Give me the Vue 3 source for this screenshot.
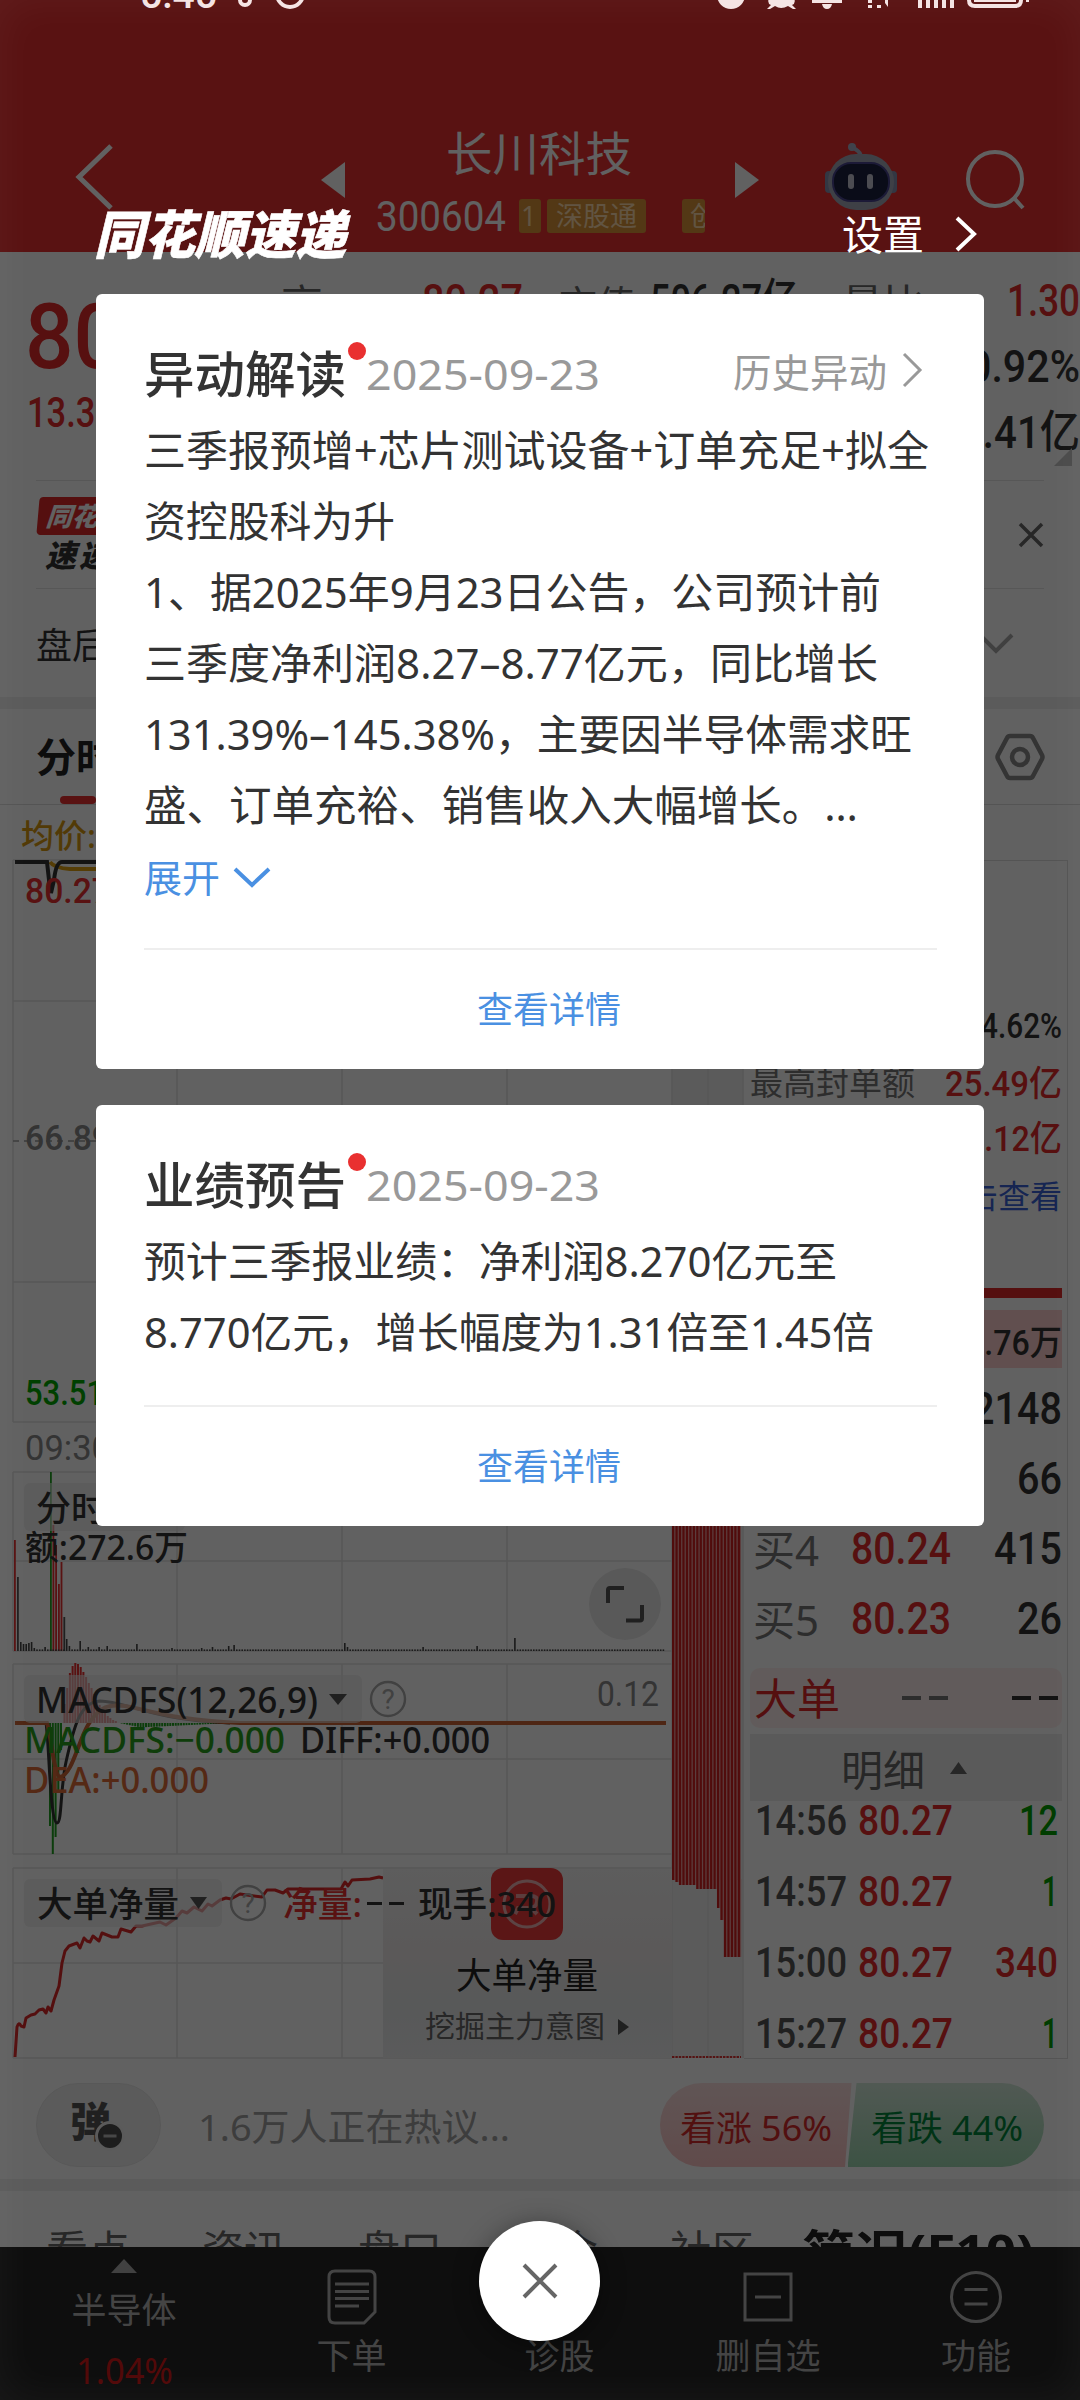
<script setup>
const vFit = {
  mounted(el, { value }) {
    const natural = el.getBoundingClientRect().width
    el.style.width = value + 'px'
    el.style.transform = `scaleX(${value / natural})`
  },
}

const cards = [
  {
    title: '异动解读', date: '2025-09-23', history: '历史异动', expand: '展开',
    lines: [
      ['三季报预增+芯片测试设备+订单充足+拟全', 785],
      ['资控股科为升', 251],
      ['1、据2025年9月23日公告，公司预计前', 737],
      ['三季度净利润8.27–8.77亿元，同比增长', 734],
      ['131.39%–145.38%，主要因半导体需求旺', 768],
      ['盛、订单充裕、销售收入大幅增长。…', 714],
    ],
  },
  {
    title: '业绩预告', date: '2025-09-23',
    lines: [
      ['预计三季报业绩：净利润8.270亿元至', 693],
      ['8.770亿元，增长幅度为1.31倍至1.45倍', 730],
    ],
  },
]

const bids = [
  ['买1', '80.27', 92, '2148', 90],
  ['买3', '80.25', 100, '66', 45],
  ['买4', '80.24', 100, '415', 68],
  ['买5', '80.23', 100, '26', 45],
]
const trades = [
  ['14:56', '12', 39, 'green'],
  ['14:57', '1', 16, 'green'],
  ['15:00', '340', 63, 'red'],
  ['15:27', '1', 16, 'green'],
]
const bottomTabs = ['看点', '资讯', '盘口', '资金', '社区']

const gridX = [177, 342, 507]

const tallBars = [
  [14, 1540, '#e93030'], [17, 1577, '#555'], [50, 1472, '#20a020'], [52.5, 1525, '#e93030'], [55.2, 1545, '#e93030'],
  [58, 1584, '#e93030'], [60.6, 1562, '#e93030'], [63.4, 1617, '#555'],
]
const spikes = { 20: 9, 23: 7, 26: 7, 28: 8, 31: 9, 34: 3, 45: 4, 66: 12, 69: 5, 80: 10, 88: 4, 99: 4, 107: 5, 137: 7, 172: 3, 200: 3, 213: 4, 229: 5, 232: 6, 343: 8, 348: 4, 421: 4, 475: 5, 513: 13 }
const smallBars = []
for (let i = 0; i < 239; i++) {
  const x = 20 + i * 2.7
  let h = 1.6
  for (const k in spikes) if (Math.abs(k - x) < 1.35) h = spikes[k]
  smallBars.push([x, h])
}

const macdUp = [[63.5, 1704], [66.2, 1688], [68.9, 1673], [71.6, 1666], [74.3, 1663], [77, 1664], [79.7, 1667], [82.4, 1672], [85.1, 1677], [87.8, 1683], [90.5, 1688], [93.2, 1694], [95.9, 1700], [98.6, 1705], [101.3, 1709], [104, 1713], [106.7, 1716], [109.4, 1718], [112.1, 1720], [114.8, 1721]]
const macdDown = [[49, 1826], [51.8, 1854], [54.6, 1837], [57.3, 1790], [60, 1750]]
const macdTail = Array.from({ length: 38 }, (_, i) => [118 + i * 2.7, i < 8 ? i * 0.55 : Math.max(0.8, 4.4 - (i - 8) * 0.13)])

const strips = Array.from({ length: 20 }, (_, i) => {
  const x = 672 + i * 3.46
  const y = x < 675 ? 1880 : x < 678 ? 1882 : x < 696 ? 1885 : x < 716 ? 1889 : x < 719.5 ? 1908 : x < 723 ? 1920 : 1957
  return [x, y]
})
</script>

<template>
  <div class="screen">
    <div class="page">
      <header class="top">
        <svg class="back" width="40" height="70" viewBox="0 0 40 70"><path d="M36 4 4 35 36 66" /></svg>
        <svg class="tri" width="24" height="36"><path d="M24 0V36L0 18z" /></svg>
        <div class="stock">
          <div class="name">长川科技</div>
          <div class="code-row">
            <span v-fit="130" class="fit code">300604</span>
            <span class="tag one">1</span><span class="tag full">深股通</span><span class="tag cut">创</span>
          </div>
        </div>
        <svg class="tri" width="24" height="36"><path d="M0 0V36L24 18z" /></svg>
        <svg class="robot" width="74" height="70" viewBox="0 0 74 70">
          <path d="M37 14C36 6 31 8 28 3" fill="none" stroke="#a9b0c8" stroke-width="4" stroke-linecap="round" />
          <circle cx="28" cy="4" r="4" fill="#a9b0c8" />
          <rect x="1" y="28" width="8" height="22" rx="4" fill="#8790b0" /><rect x="65" y="28" width="8" height="22" rx="4" fill="#8790b0" />
          <rect x="4" y="11" width="66" height="56" rx="28" fill="#a4a8b8" />
          <rect x="9" y="20" width="56" height="38" rx="18" fill="#1b2040" stroke="#4a4690" stroke-width="2" />
          <rect x="24" y="31" width="6" height="15" rx="3" fill="#c8c8d4" /><rect x="43" y="31" width="6" height="15" rx="3" fill="#c8c8d4" />
        </svg>
        <svg class="search" width="64" height="64" viewBox="0 0 64 64"><circle cx="32" cy="31" r="27" /><path d="M51 50 60 60" /></svg>
      </header>

      <section class="quote">
        <div class="price-col">
          <div class="big"><span v-fit="218" class="fit">80.27</span></div>
          <div class="chg"><span v-fit="88" class="fit">13.38</span></div>
        </div>
        <div class="stats">
          <div class="stat first">
            <span class="k">高</span><span v-fit="101" class="fit num red v1">80.27</span>
            <span class="k k2">市值</span><span v-fit="148" class="fit num v2">506.27亿</span>
            <span class="k k3">量比</span><span v-fit="73" class="fit num red v3">1.30</span>
          </div>
          <div class="stat"><span v-fit="112" class="fit num v3">0.92%</span></div>
          <div class="stat"><span v-fit="120" class="fit num v3">0.41亿</span></div>
          <svg class="corner" width="18" height="18"><path d="M18 0V18H0z" /></svg>
        </div>
      </section>

      <section class="flash">
        <div class="logo">
          <div class="logo-top">同花顺</div>
          <div class="logo-bottom">速递</div>
        </div>
        <svg width="26" height="26" viewBox="0 0 26 26"><path d="M2 2 24 24M24 2 2 24" /></svg>
      </section>
      <section class="after">
        <span>盘后</span>
        <svg width="36" height="22" viewBox="0 0 36 22"><path d="M2 2 18 18 34 2" /></svg>
      </section>
      <div class="band"></div>
      <nav class="chart-tabs">
        <span class="active">分时</span>
        <svg width="50" height="48" viewBox="0 0 50 48"><path d="M15 3H35Q37 3 38 5L47 22Q48 24 47 26L38 43Q37 45 35 45H15Q13 45 12 43L3 26Q2 24 3 22L12 5Q13 3 15 3z" /><circle cx="25" cy="24" r="8" /></svg>
      </nav>

      <section class="market">
        <svg class="charts" width="744" height="1254" viewBox="0 805 744 1254">
          <rect x="672" y="860" width="71" height="1198" fill="#f0f0f0" />
          <g class="grid">
            <path d="M13 860H743M13 1001H672M13 1282H672M13 1422H672M13 1472H672M13 1561H672M13 1651H672M13 1664H672M13 1759H672M13 1854H672M13 1868H672M13 1963H672M13 2058H672" />
            <path d="M13 860V1422M13 1472V1651M13 1664V1854M13 1868V2058M672 860V2058M708 860V2058M743 860V2058" />
            <path v-for="x in gridX" :key="x" :d="`M${x} 860V1422M${x} 1472V1651M${x} 1664V1854M${x} 1868V2058`" />
            <path class="dash" d="M13 1141H672" />
          </g>

          <path class="avg" d="M50 862Q54 868 70 869H300" />
          <path class="now" d="M15 862H47L49 880 51 893 54 880Q56 862 62 862H300" />
          <text class="cjk" x="21" y="848" font-size="33" fill="#d89a10">均价:80.20</text>
          <text class="n" x="25" y="903" font-size="35" fill="#e93030" textLength="86" lengthAdjust="spacingAndGlyphs">80.27</text>
          <text class="n" x="25" y="1150" font-size="35" fill="#888" textLength="86" lengthAdjust="spacingAndGlyphs">66.89</text>
          <text class="n" x="25" y="1405" font-size="35" fill="#00a800" textLength="79" lengthAdjust="spacingAndGlyphs">53.51</text>
          <text class="n r" x="25" y="1460" font-size="35" fill="#888" textLength="86" lengthAdjust="spacingAndGlyphs">09:30</text>

          <rect v-for="b in tallBars" :key="b[0]" :x="b[0]" :y="b[1]" width="1.8" :height="1651 - b[1]" :fill="b[2]" />
          <rect v-for="b in smallBars" :key="b[0]" :x="b[0]" :y="1651 - b[1]" width="1.6" :height="b[1]" fill="#444" />
          <rect class="chip" x="24" y="1483" width="161" height="48" rx="6" />
          <text class="cjk" x="36" y="1521" font-size="35" fill="#333">分时量</text>
          <text class="cjk" x="25" y="1560" font-size="34" fill="#333" textLength="163" lengthAdjust="spacingAndGlyphs">额:272.6万</text>
          <circle cx="625" cy="1604" r="36" fill="#eaeaea" />
          <path class="expand" d="M624 1588H610Q608 1588 608 1590V1603M626 1620.500H640Q642 1620.500 642 1618.500V1605" />

          <rect v-for="b in macdUp" :key="b[0]" :x="b[0]" :y="b[1]" width="2" :height="1723 - b[1]" fill="#e93030" />
          <rect v-for="b in macdDown" :key="b[0]" :x="b[0]" y="1723" width="2" :height="b[1] - 1723" fill="#20a020" />
          <rect v-for="b in macdTail" :key="b[0]" :x="b[0]" y="1723" width="2" :height="b[1]" fill="#20a020" />
          <path class="line" stroke="#333" d="M15 1723H46C49 1740 50 1823 57 1823C62 1823 60 1790 66 1762C74 1726 80 1702 100 1701C125 1701 150 1720 230 1723" />
          <path class="line dea" d="M15 1723H47C52 1740 54 1776 60 1777C72 1775 78 1742 88 1725C100 1705 110 1704 125 1706C150 1710 170 1720 240 1723H666" />
          <rect class="chip" x="24" y="1675" width="338" height="48" rx="6" />
          <text class="n l" x="36" y="1713" font-size="36" fill="#333" textLength="282" lengthAdjust="spacingAndGlyphs">MACDFS(12,26,9)</text>
          <path d="M329 1694H347L338 1705z" fill="#555" />
          <g class="help"><circle cx="388" cy="1699" r="17" /><text x="388" y="1709">?</text></g>
          <text class="n r" x="597" y="1706" font-size="35" fill="#888" textLength="62" lengthAdjust="spacingAndGlyphs">0.12</text>
          <text class="n l" x="24" y="1753" font-size="36" fill="#28a01c" textLength="261" lengthAdjust="spacingAndGlyphs">MACDFS:−0.000</text>
          <text class="n l" x="300" y="1753" font-size="36" fill="#333" textLength="190" lengthAdjust="spacingAndGlyphs">DIFF:+0.000</text>
          <text class="n l" x="24" y="1793" font-size="36" fill="#e06c38" textLength="185" lengthAdjust="spacingAndGlyphs">DEA:+0.000</text>

          <path class="flow" d="M15 2057 17 2027Q19 2021 21 2026L24 2027 26 2018 31 2015 35 2014 39 2010 43 2009 46 2013 48 2007 51 2011 54 2000 59 1986 62 1963 65 1951 69 1946 77 1943 80 1948 84 1938 87 1941 90 1942 93 1936 99 1941 102 1933 112 1937 118 1937 121 1929 131 1932 136 1926 142 1926 160 1922 166 1925 176 1918 182 1911 187 1913 194 1907 202 1911 208 1904 212 1906 220 1900 226 1898 231 1899 240 1894 262 1897 267 1890 275 1890 283 1893 288 1889H341L345 1882 348 1886 352 1880 370 1879 379 1877 383 1878" />
          <rect class="chip" x="24" y="1879" width="198" height="48" rx="6" />
          <text class="cjk" x="37" y="1917" font-size="35.500" fill="#333">大单净量</text>
          <path d="M190 1897H207L198.500 1909z" fill="#555" />
          <g class="help"><circle cx="248" cy="1903" r="17" /><text x="248" y="1913">?</text></g>

          <defs>
            <linearGradient id="adBg" x1="0" y1="0" x2="0" y2="1">
              <stop offset="0" stop-color="#f3f3f3" /><stop offset=".45" stop-color="#efeaea" /><stop offset=".72" stop-color="#e6e9ea" /><stop offset="1" stop-color="#eeeeef" />
            </linearGradient>
          </defs>
          <rect x="383" y="1869" width="289" height="189" fill="url(#adBg)" />
          <rect x="491" y="1868" width="72" height="72" rx="12" fill="#f03c3c" />
          <circle cx="527" cy="1904" r="23" fill="none" stroke="#f0b4b4" stroke-width="3" />
          <path d="M516 1896H531Q538 1896 537 1902T529 1908H518L515 1914M531 1908 537 1914" fill="none" stroke="#f0a0a0" stroke-width="4" />
          <text class="cjk" x="283" y="1917" font-size="35" fill="#e93030" textLength="79" lengthAdjust="spacingAndGlyphs">净量:</text>
          <path d="M367 1903.500H382M389 1903.500H404" stroke="#333" stroke-width="3" />
          <text class="cjk" x="418" y="1917" font-size="35" fill="#333" textLength="138" lengthAdjust="spacingAndGlyphs">现手:340</text>
          <text class="cjk thin" x="456" y="1989" font-size="36" fill="#222" textLength="142" lengthAdjust="spacingAndGlyphs">大单净量</text>
          <text class="cjk thin" x="425" y="2037" font-size="30" fill="#666" textLength="180" lengthAdjust="spacingAndGlyphs">挖掘主力意图</text>
          <path d="M618 2019V2035L629 2027z" fill="#555" />

          <rect x="672" y="1105" width="69" height="775" fill="#f0a0a0" />
          <rect v-for="s in strips" :key="'g' + s[0]" :x="s[0]" y="1879" width="3.460" :height="s[1] - 1879" fill="#f0a0a0" />
          <rect v-for="s in strips" :key="s[0]" :x="s[0]" y="1105" width="2.200" :height="s[1] - 1105" fill="#d32020" />
          <path d="M672 2057H741" stroke="#d33" stroke-width="2" stroke-dasharray="2.400 1" />
        </svg>

        <div class="side">
          <div class="info i1"><span v-fit="81" class="fit">4.62%</span></div>
          <div class="info i2"><span class="label">最高封单额</span><span v-fit="117" class="fit red">25.49亿</span></div>
          <div class="info red"><span v-fit="96" class="fit">3.12亿</span></div>
          <div class="info link"><span>点击查看</span></div>
          <div class="redbar"></div>
          <div class="pink"><span v-fit="96" class="fit">2.76万</span></div>
          <div class="bids">
            <div v-for="b in bids" :key="b[0]" class="bid">
              <span class="lv">{{ b[0] }}</span><span v-fit="b[2]" class="fit num red bp">{{ b[1] }}</span><span v-fit="b[4]" class="fit num">{{ b[3] }}</span>
            </div>
          </div>
          <div class="bigorder"><span>大单</span><i></i><i></i><b></b><b class="last"></b></div>
          <div class="detail">明细<svg width="17" height="12"><path d="M8.500 0 17 12H0z" /></svg></div>
          <div class="trades">
            <div v-for="t in trades" :key="t[0]" class="trade">
              <span v-fit="92" class="fit t">{{ t[0] }}</span><span v-fit="95" class="fit red p">80.27</span><span class="q" :class="t[3]"><span v-fit="t[2]" class="fit">{{ t[1] }}</span></span>
            </div>
          </div>
        </div>
      </section>

      <section class="chat">
        <div class="bullet">
          <span>弹</span>
          <svg width="30" height="30" viewBox="0 0 30 30"><circle cx="15" cy="15" r="13.500" fill="#4c4c4c" stroke="#ededed" stroke-width="3" /><path d="M8.500 15H21.500" stroke="#bbb" stroke-width="3" /></svg>
        </div>
        <div class="hot"><span v-fit="312" class="fit">1.6万人正在热议...</span></div>
        <div class="votes">
          <div class="up"><span v-fit="152" class="fit">看涨 56%</span></div>
          <div class="down"><span v-fit="152" class="fit">看跌 44%</span></div>
        </div>
      </section>
      <div class="band"></div>
      <nav class="tabs">
        <span v-for="t in bottomTabs" :key="t" class="tab">{{ t }}</span>
        <span v-fit="232" class="fit strong">简况(F10)</span>
      </nav>
      <footer class="foot">
        <div class="f sector">
          <svg width="26" height="14"><path d="M13 0 26 14H0z" /></svg>
          <span>半导体</span><span v-fit="97" class="fit pct">1.04%</span>
        </div>
        <div class="f order">
          <svg width="50" height="56" viewBox="0 0 50 56"><path d="M8 2H42Q48 2 48 8V43L37 54H8Q2 54 2 48V8Q2 2 8 2zM8 15H42M8 22.500H42M8 29.500H42M8 37H32" /></svg>
          <span>下单</span>
        </div>
        <div class="f diag"><svg width="50" height="56"></svg><span>诊股</span></div>
        <div class="f del">
          <svg width="50" height="56" viewBox="0 0 50 56"><path d="M2 5H48V51H2zM12 28H38" /></svg>
          <span>删自选</span>
        </div>
        <div class="f func">
          <svg width="52" height="56" viewBox="0 0 52 56"><circle cx="26" cy="28" r="24.500" /><path d="M14.500 20.500H37.500M14.500 35H37.500" /></svg>
          <span>功能</span>
        </div>
      </footer>
    </div>

    <div class="overlay">
      <svg class="status" width="1080" height="14" viewBox="0 0 1080 14">
        <text x="140" y="8" font-size="40" textLength="77" lengthAdjust="spacingAndGlyphs">5:45</text>
        <circle cx="245" cy="0" r="5" class="o" /><circle cx="290" cy="-6" r="13" class="o" />
        <circle cx="731" cy="-5" r="14" />
        <path d="M770 -4H793Q797 3 792 5L796 9 793 9 788 6Q781 10 775 6L770 9 767 9 771 5Q766 3 770 -4z" />
        <path d="M812 0H842V3H812zM822 4H832Q831 9 827 9T822 4z" />
        <path d="M868 0H872V3H868zM868 5H872V8H868zM877 5H881V8H877zM885 0H888V7L885 3z" />
        <path d="M918 0H922V8H918zM926 0H930V8H926zM934 0H938V8H934zM942 0H946V8H942zM950 0H954V8H950z" />
        <path class="o" d="M969 -6V0Q969 6 975 6H1015Q1021 6 1021 0V-6" /><path d="M974 -2H1016V2H974z" /><path d="M1026 -2H1029V2H1026z" />
      </svg>
      <div class="modal-head">
        <span v-fit="252" class="fit brand">同花顺速递</span>
        <span class="set">设置</span>
        <svg width="24" height="38" viewBox="0 0 24 38"><path d="M3 3 20 19 3 35" /></svg>
      </div>
      <article v-for="c in cards" :key="c.title" class="card">
        <div class="head">
          <h2>{{ c.title }}<i class="dot"></i></h2>
          <span v-fit="234" class="fit date">{{ c.date }}</span>
          <div v-if="c.history" class="history">{{ c.history }}<svg width="22" height="36" viewBox="0 0 22 36"><path d="M3 2 19 18 3 34" /></svg></div>
        </div>
        <div class="body">
          <div v-for="l in c.lines" :key="l[0]" class="ln"><span v-fit="l[1]" class="fit">{{ l[0] }}</span></div>
          <div v-if="c.expand" class="more">{{ c.expand }}<svg width="38" height="22" viewBox="0 0 38 22"><path d="M2 2 19 18 36 2" /></svg></div>
        </div>
        <div class="foot-link">查看详情</div>
      </article>
      <button class="close"><svg width="36" height="36" viewBox="0 0 36 36"><path d="M2 2 34 34M34 2 2 34" /></svg></button>
    </div>
  </div>
</template>

<style>
body { margin: 0; }
</style>

<style scoped>
* { box-sizing: border-box; }
.screen { position: relative; width: 1080px; height: 2400px; overflow: hidden; font-family: "Noto Sans", "Noto Sans CJK SC", sans-serif; color: #333; white-space: nowrap; }
svg { display: block; flex: none; overflow: visible; }
path { stroke-linecap: butt; }
.fit { display: inline-block; flex: none; transform-origin: 0 50%; white-space: nowrap; }
.red { color: #e42c2c; }
.green { color: #00a000; }
.page { height: 2400px; background: #fff; display: flex; flex-direction: column; }
.page > * { flex: none; }

.top { height: 252px; background: #e93030; display: flex; align-items: flex-start; color: #fff; }
.back { margin: 142px 0 0 75px; fill: none; stroke: #fff; stroke-width: 5; }
.tri { margin-top: 162px; fill: #fff; }
.back + .tri { margin-left: 206px; }
.stock { width: 390px; padding-left: 31px; display: flex; flex-direction: column; }
.name { margin-top: 126px; height: 54px; line-height: 54px; font-size: 46.5px; text-align: center; padding-right: 33px; }
.code-row { display: flex; align-items: center; height: 34px; margin-top: 19px; }
.code { font: 400 43px/34px Roboto; color: #fff; }
.tag { background: #d99338; color: #ffdcae; height: 34px; line-height: 34px; font-size: 27px; overflow: hidden; border-radius: 3px; }
.one { width: 22px; margin-left: 13px; padding-left: 2px; }
.full { width: 99px; margin-left: 6px; text-align: center; }
.cut { width: 23px; margin-left: 36px; padding-left: 8px; }
.robot { margin: 143px 0 0 65px; }
.search { margin: 148px 0 0 65px; fill: none; stroke: #fff; stroke-width: 4; }

.quote { height: 228px; display: flex; position: relative; }
.price-col { width: 281px; padding-left: 25px; font-family: Roboto, sans-serif; font-weight: 500; color: #e42c2c; }
.big { margin-top: 39px; height: 92px; font-size: 91px; line-height: 92px; }
.chg { font-size: 42px; line-height: 44px; margin-top: 8px; padding-left: 2px; }
.stats { flex: 1; padding-top: 16px; position: relative; }
.stat { height: 66px; display: flex; align-items: center; justify-content: flex-end; }
.num { font-family: Roboto, "Noto Sans CJK SC", sans-serif; font-weight: 500; font-size: 45px; line-height: 60px; color: #333; }
.num.red { color: #e42c2c; }
.k { font-size: 42px; color: #666; }
.first { justify-content: flex-start; }
.v1 { margin-left: 99px; }
.k2 { margin-left: 36px; font-size: 38px; }
.v2 { margin-left: 15px; }
.k3 { margin-left: 44px; font-size: 41px; }
.v3 { margin-left: auto; }
.corner { position: absolute; right: 8px; bottom: 14px; fill: #c4c4c4; }

.flash { margin: 0 36px; height: 109px; border-top: 1px solid #e4e4e4; border-bottom: 1px solid #e4e4e4; display: flex; justify-content: space-between; align-items: center; }
.flash > svg { fill: none; stroke: #666; stroke-width: 3.5; }
.logo { font-weight: 900; font-style: italic; }
.logo-top { margin-left: 2px; width: 96px; height: 38px; border-radius: 4px; background: #e02828; color: #fff; font-size: 26px; line-height: 38px; padding-left: 8px; transform: skewX(-5deg); }
.logo-bottom { font-size: 31px; line-height: 34px; padding-left: 9px; margin-top: 3px; letter-spacing: 3px; }
.after { height: 108px; padding: 0 66px 0 36px; display: flex; align-items: center; justify-content: space-between; font-size: 36px; }
.after svg { fill: none; stroke: #a8a8a8; stroke-width: 4; margin: 2px 0 0; }
.band { height: 12px; background: #f0f0f0; }
.chart-tabs { height: 96px; border-bottom: 1px solid #dedede; display: flex; justify-content: space-between; padding: 0 35px 0 36px; }
.active { font-size: 40px; font-weight: 700; line-height: 96px; height: 95px; position: relative; color: #222; }
.active::after { content: ""; position: absolute; left: 24px; bottom: 0; width: 36px; height: 8px; border-radius: 4px; background: #e93030; }
.chart-tabs svg { margin-top: 24px; fill: none; stroke: #888; stroke-width: 4.5; }

.market { height: 1254px; display: flex; }
.grid path { stroke: #e4e4e4; stroke-width: 1.6; }
.grid .dash { stroke: #999; stroke-dasharray: 6 5; }
.avg { fill: none; stroke: #e0a010; stroke-width: 4; }
.now { fill: none; stroke: #333; stroke-width: 4; }
.n { font-family: Roboto, sans-serif; font-weight: 500; }
.n.r { font-weight: 400; }
.n.l { font-family: "Noto Sans", sans-serif; font-weight: 500; }
.cjk { font-family: "Noto Sans", "Noto Sans CJK SC", sans-serif; font-weight: 500; }
.thin { font-weight: 400; }
.chip { fill: #e8e8e8; fill-opacity: .62; }
.expand { fill: none; stroke: #555; stroke-width: 4; }
.line { fill: none; stroke-width: 3; }
.dea { stroke: #cc6435; stroke-width: 4; }
.flow { fill: none; stroke: #dc2828; stroke-width: 3; stroke-linejoin: round; }
.help circle { fill: none; stroke: #aaa; stroke-width: 2.4; }
.help text { font: 28px Roboto; fill: #aaa; text-anchor: middle; }

.side { width: 324px; margin-top: 55px; border: 1px solid #dedede; border-left: 0; padding: 0 5px 0 6px; display: flex; flex-direction: column; }
.side > * { flex: none; }
.info { height: 56px; display: flex; align-items: center; justify-content: flex-end; font: 500 35px "Roboto", "Noto Sans CJK SC", sans-serif; }
.info .label { font-size: 33px; font-weight: 400; color: #777; margin-right: auto; }
.i1 { margin-top: 137px; }
.i2 { height: 53px; }
.link { color: #3a63d8; font-weight: 400; font-size: 32px; height: 62px; }
.redbar { height: 10px; background: #e02828; margin-top: 63px; }
.pink { height: 58px; margin-top: 12px; background: #ffd0d0; display: flex; align-items: center; justify-content: flex-end; font: 500 35px "Roboto", "Noto Sans CJK SC", sans-serif; }
.bids { margin-top: 6px; }
.bid { height: 70px; display: flex; align-items: center; justify-content: space-between; padding-left: 3px; }
.lv { width: 98px; font-size: 42px; color: #777; margin-top: -4px; }
.bp { margin-right: auto; }
.bigorder { height: 60px; margin-top: 14px; background: #fff0ee; border-radius: 10px; display: flex; align-items: center; padding: 0 4px 0 4px; font-size: 43px; color: #e02828; }
.bigorder span { margin-top: -4px; }
.bigorder i, .bigorder b { width: 19px; height: 4px; background: #777; margin-left: 8px; }
.bigorder span + i { margin-left: 62px; }
.bigorder b { background: #333; margin-left: auto; }
.bigorder .last { margin-left: 8px; }
.detail { margin-top: 6px; height: 67px; background: #ededed; display: flex; align-items: center; font-size: 42px; color: #666; padding-left: 91px; }
.detail svg { margin-left: 25px; fill: #666; }
.trades { margin-top: -16px; }
.trade { height: 71px; display: flex; align-items: center; font: 500 42px Roboto, sans-serif; padding: 0 4px 0 5px; }
.t { color: #555; }
.trade .p { margin-left: 11px; margin-right: auto; }

.chat { height: 120px; padding: 12px 36px 0; display: flex; align-items: center; }
.bullet { width: 125px; height: 84px; border-radius: 42px; background: #efefef; border: 1px solid #e8e8e8; display: flex; align-items: center; padding-left: 33px; font-size: 41px; font-weight: 900; color: #555; }
.bullet span { line-height: 60px; margin-top: -8px; }
.bullet svg { margin: 22px 0 0 -16px; }
.hot { margin: 0 0 0 37px; font-size: 37px; color: #a0a0a0; }
.votes { margin-left: auto; width: 384px; height: 84px; border-radius: 42px; overflow: hidden; display: flex; font-size: 35px; }
.votes > div { display: flex; align-items: center; }
.up { width: 194px; padding-left: 20px; color: #d82c2c; background: linear-gradient(#fbe0e0, #fbc4c4); clip-path: polygon(0 0, 100% 0, 185px 100%, 0 100%); }
.down { width: 199px; margin-left: -4px; padding-left: 23px; color: #00863c; background: linear-gradient(#d4eadb, #9fd8b2); clip-path: polygon(9px 0, 100% 0, 100% 100%, 0 100%); }
.tabs { height: 56px; overflow: hidden; display: flex; padding-left: 46px; font-size: 42px; line-height: 50px; padding-top: 34px; color: #666; }
.tab { width: 156px; }
.strong { color: #222; font-weight: 700; font-size: 46px; margin-left: -24px; }
.foot { height: 153px; background: #252525; display: flex; color: #b4b4b4; font-size: 35px; }
.f { display: flex; flex-direction: column; align-items: center; width: 208px; }
.f svg { fill: none; stroke: #b4b4b4; stroke-width: 3; margin-top: 22px; }
.f span { line-height: 44px; margin-top: 9px; }
.sector { width: 248px; }
.sector svg { margin-top: 12px; fill: #aaa; stroke: none; }
.sector span { margin-top: 15px; }
.sector .pct { color: #d81818; font-size: 37px; margin-top: 16px; }
.order { width: 207px; }
.diag { width: 209px; }
.func { width: 208px; }

.overlay { position: absolute; inset: 0; background: rgba(0, 0, 0, .62); box-shadow: inset 0 0 46px rgba(255, 255, 255, .05); display: flex; flex-direction: column; align-items: center; }
.status { height: 14px; fill: #f5e4e4; font-family: Roboto, sans-serif; font-weight: 500; }
.status .o { fill: none; stroke: #f5e4e4; stroke-width: 4; }
.modal-head { width: 888px; height: 280px; padding-top: 190px; display: flex; align-items: flex-start; color: #fff; }
.brand { font-size: 52px; line-height: 60px; font-weight: 900; font-style: italic; margin-left: -2px; -webkit-text-stroke: .6px #fff; }
.set { margin-left: auto; font-size: 41px; line-height: 60px; }
.modal-head svg { margin: 11px 6px 0 30px; fill: none; stroke: #fff; stroke-width: 4; }
.card { width: 888px; background: #fff; border-radius: 6px; margin-bottom: 36px; padding: 42px 47px 0 48px; display: flex; flex-direction: column; }
.card:nth-of-type(1) { height: 775px; }
.card:nth-of-type(2) { height: 421px; margin-bottom: 0; }
.head { display: flex; height: 78px; padding-bottom: 3px; align-items: center; }
h2 { margin: 0; font-size: 50.5px; font-weight: 500; line-height: 70px; position: relative; width: 222px; }
.dot { position: absolute; left: 204px; top: 3px; width: 18px; height: 18px; border-radius: 9px; background: #e93030; }
.date { font-size: 42px; color: #999; }
.history { margin-left: auto; display: flex; align-items: center; font-size: 38.5px; color: #999; margin-right: 14px; margin-top: -8px; }
.history svg { margin-left: 14px; fill: none; stroke: #999; stroke-width: 3; }
.body { flex: 1; font-size: 42px; }
.ln { height: 71px; line-height: 71px; }
.more { display: flex; align-items: center; height: 70px; font-size: 38px; color: #4a90e2; }
.more svg { margin-left: 13px; margin-top: 5px; fill: none; stroke: #4a90e2; stroke-width: 4; }
.foot-link { height: 121px; border-top: 2px solid #eee; text-align: center; padding-left: 17px; font-size: 36px; line-height: 119px; color: #4a90e2; }
.close { position: absolute; left: 479px; top: 2221px; width: 121px; height: 120px; border: 0; border-radius: 50%; background: #fff; box-shadow: 0 4px 26px rgba(0, 0, 0, .4); display: flex; align-items: center; justify-content: center; padding: 0; }
.close svg { fill: none; stroke: #666; stroke-width: 4; }
</style>
